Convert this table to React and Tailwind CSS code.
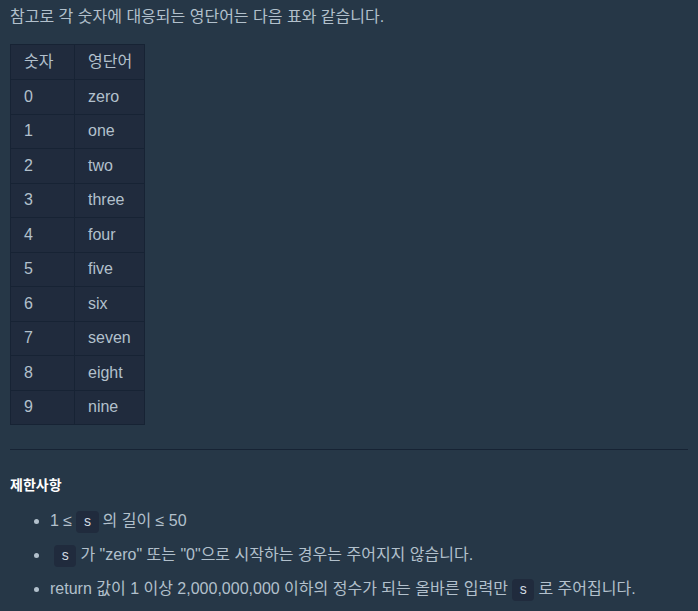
const rows = [
  ['0', 'zero'],
  ['1', 'one'],
  ['2', 'two'],
  ['3', 'three'],
  ['4', 'four'],
  ['5', 'five'],
  ['6', 'six'],
  ['7', 'seven'],
  ['8', 'eight'],
  ['9', 'nine'],
];

function Code({ children }) {
  return (
    <code className="inline-block rounded-[4px] bg-[#202b3d] px-[7px] py-[1px] mx-[4px] leading-[20px] text-[14px] text-[#d3dce3] font-['Liberation_Mono',monospace] align-middle">
      {children}
    </code>
  );
}

export default function App() {
  return (
    <div className="min-h-[611px] bg-[#263747] px-[10px] pt-[5px] pb-6 text-[#b2c0cc] text-[16px] font-['Liberation_Sans','Noto_Sans_CJK_KR',sans-serif]">
      <p className="leading-[24px]">참고로 각 숫자에 대응되는 영단어는 다음 표와 같습니다.</p>

      <table className="mt-[15px] border-collapse bg-[#202b3d] whitespace-nowrap">
        <thead>
          <tr>
            <th className="h-[35px] w-[64px] border border-[#172334] pl-[13px] pr-[6px] text-left font-normal">숫자</th>
            <th className="h-[35px] w-[70px] border border-[#172334] pl-[13px] pr-[6px] text-left font-normal">영단어</th>
          </tr>
        </thead>
        <tbody>
          {rows.map(([n, w]) => (
            <tr key={n}>
              <td className="h-[34.5px] border border-[#172334] pl-[13px] pr-[6px]">{n}</td>
              <td className="h-[34.5px] border border-[#172334] pl-[13px] pr-[6px]">{w}</td>
            </tr>
          ))}
        </tbody>
      </table>

      <hr className="mt-[24px] border-0 border-t border-[#172334]" />

      <h5 className="mt-[25px] text-[14px] font-bold text-white leading-[20px]">제한사항</h5>

      <ul className="mt-[13px] pl-[40px] list-disc space-y-[9px] marker:text-[#b2c0cc]">
        <li className="leading-[25px]">
          1 ≤<Code>s</Code>의 길이 ≤ 50
        </li>
        <li className="leading-[25px]">
          <Code>s</Code>가 "zero" 또는 "0"으로 시작하는 경우는 주어지지 않습니다.
        </li>
        <li className="leading-[25px]">
          return 값이 1 이상 2,000,000,000 이하의 정수가 되는 올바른 입력만<Code>s</Code>로 주어집니다.
        </li>
      </ul>
    </div>
  );
}
